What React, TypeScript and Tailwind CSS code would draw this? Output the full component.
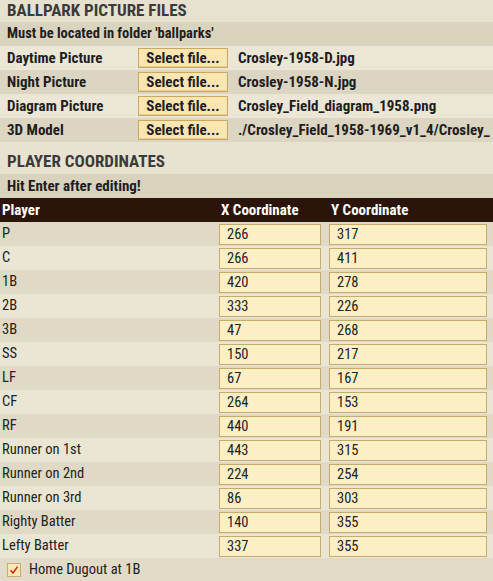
import React from "react";

const font = {
  fontFamily: '"Roboto Condensed", "Liberation Sans Narrow", "DejaVu Sans Condensed", "Roboto", sans-serif',
};

const files = [
  { label: "Daytime Picture", file: "Crosley-1958-D.jpg" },
  { label: "Night Picture", file: "Crosley-1958-N.jpg" },
  { label: "Diagram Picture", file: "Crosley_Field_diagram_1958.png" },
  { label: "3D Model", file: "./Crosley_Field_1958-1969_v1_4/Crosley_" },
];

const players: [string, number, number][] = [
  ["P", 266, 317],
  ["C", 266, 411],
  ["1B", 420, 278],
  ["2B", 333, 226],
  ["3B", 47, 268],
  ["SS", 150, 217],
  ["LF", 67, 167],
  ["CF", 264, 153],
  ["RF", 440, 191],
  ["Runner on 1st", 443, 315],
  ["Runner on 2nd", 224, 254],
  ["Runner on 3rd", 86, 303],
  ["Righty Batter", 140, 355],
  ["Lefty Batter", 337, 355],
];

const CoordInput = ({ value, className }: { value: number; className: string }) => (
  <div
    className={`shrink-0 h-[21px] bg-[#fdefc4] border border-[#c6ab6c] pl-[7px] text-[14.5px] leading-[19px] text-[#222] ${className}`}
  >
    {value}
  </div>
);

export default function App() {
  return (
    <div
      className="w-[493px] h-[581px] overflow-hidden bg-[#e3dcc8] text-[#1e1e1e] whitespace-nowrap"
      style={font}
    >
      {/* ballpark files */}
      <div className="h-[22px] pl-[7px] flex items-center bg-[#e7e1cf] text-[17px] font-bold text-[#3b3b3b]">
        BALLPARK PICTURE FILES
      </div>
      <div className="h-[24px] pl-[7px] flex items-center bg-[#dad3be] text-[14.5px] font-bold">
        Must be located in folder 'ballparks'
      </div>
      {files.map((f, i) => (
        <div
          key={f.label}
          className={`h-[24px] flex items-center text-[15px] font-bold overflow-hidden ${i % 2 === 0 ? "bg-[#ebe6d6]" : "bg-[#dcd5c1]"}`}
        >
          <div className="shrink-0 w-[138px] pl-[7px]">{f.label}</div>
          <div className="shrink-0 w-[90px] h-[20px] flex items-center justify-center bg-[#fbe6b2] border border-[#c9a862] shadow-[inset_0_-1px_0_#e8cf8f]">
            Select file...
          </div>
          <div className="pl-[10px] min-w-0">{f.file}</div>
        </div>
      ))}

      {/* player coordinates */}
      <div className="h-[8px] bg-[#e8e2d1]" />
      <div className="h-[24px] pl-[7px] flex items-center bg-[#e8e2d1] text-[17px] font-bold text-[#3b3b3b]">
        PLAYER COORDINATES
      </div>
      <div className="h-[24px] pl-[7px] flex items-center bg-[#d9d2bd] text-[15px] font-bold">
        Hit Enter after editing!
      </div>
      <div className="h-[24px] flex items-center bg-[#2b150a] text-white text-[15px] font-bold">
        <div className="w-[221px] pl-[2px]">Player</div>
        <div className="w-[110px]">X Coordinate</div>
        <div>Y Coordinate</div>
      </div>
      {players.map(([name, x, y], i) => (
        <div
          key={name}
          className={`h-[24px] flex items-center text-[14.5px] ${i % 2 === 0 ? "bg-[#e0d9c5]" : "bg-[#ebe5d4]"}`}
        >
          <div className="shrink-0 w-[219px] pl-[2px] text-[#222]">{name}</div>
          <CoordInput value={x} className="w-[102px]" />
          <CoordInput value={y} className="ml-[8px] w-[158px]" />
        </div>
      ))}
      <div className="h-[24px] flex items-center pl-[7px] gap-[8px] bg-[#e2dbc7] text-[14.5px]">
        <div className="w-[14px] h-[14px] flex items-center justify-center bg-[#fbe6b5] border border-[#c6ab6c]">
          <svg width="10" height="10" viewBox="0 0 10 10">
            <path d="M1.5 5.2 L4 8 L8.6 1.6" fill="none" stroke="#d8261c" strokeWidth="1.6" />
          </svg>
        </div>
        <span className="text-[#222]">Home Dugout at 1B</span>
      </div>
    </div>
  );
}
